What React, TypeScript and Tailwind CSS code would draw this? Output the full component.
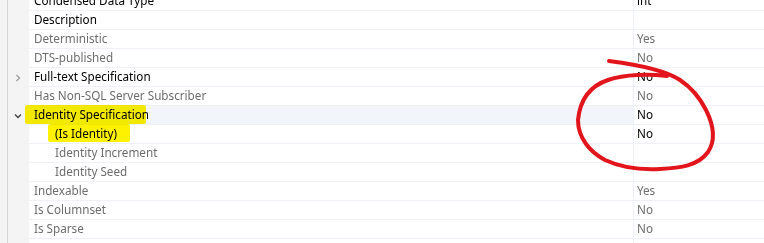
import React from 'react';

type Row = {
  label: string;
  value?: string;
  strong?: boolean;
  indent?: boolean;
  chevron?: 'right' | 'down';
  selected?: boolean;
};

const rows: Row[] = [
  { label: 'Condensed Data Type', value: 'int', strong: true },
  { label: 'Description', strong: true },
  { label: 'Deterministic', value: 'Yes' },
  { label: 'DTS-published', value: 'No' },
  { label: 'Full-text Specification', value: 'No', strong: true, chevron: 'right' },
  { label: 'Has Non-SQL Server Subscriber', value: 'No' },
  { label: 'Identity Specification', value: 'No', strong: true, chevron: 'down', selected: true },
  { label: '(Is Identity)', value: 'No', strong: true, indent: true },
  { label: 'Identity Increment', indent: true },
  { label: 'Identity Seed', indent: true },
  { label: 'Indexable', value: 'Yes' },
  { label: 'Is Columnset', value: 'No' },
  { label: 'Is Sparse', value: 'No' },
  { label: '' },
];

const Chevron = ({ dir }: { dir: 'right' | 'down' }) =>
  dir === 'right' ? (
    <svg width="8" height="8" viewBox="0 0 8 8" className="text-[#9a9a9a]">
      <path d="M2.5 1 L5.5 4 L2.5 7" fill="none" stroke="currentColor" strokeWidth="1.3" />
    </svg>
  ) : (
    <svg width="8" height="8" viewBox="0 0 8 8" className="text-[#444]">
      <path d="M1 2.5 L4 5.5 L7 2.5" fill="none" stroke="currentColor" strokeWidth="1.4" />
    </svg>
  );

export default function App() {
  return (
    <div
      className="relative w-[764px] h-[243px] overflow-hidden bg-white text-[11.7px]"
      style={{ fontFamily: '"Noto Sans", "Open Sans", sans-serif' }}
    >
      <div className="flex flex-col -mt-[8px]">
        {rows.map((r, i) => (
          <div key={i} className="flex h-[19px]">
            <div className="flex w-[29px] shrink-0 bg-[#f4f4f4]">
              <div className="w-[7px]" />
              <div className="w-px bg-[#d4d4d4]" />
              <div className="flex flex-1 items-center justify-center pr-[1px]">
                {r.chevron && <Chevron dir={r.chevron} />}
              </div>
            </div>
            <div
              className={`flex flex-1 items-center border-b border-[#eef1f5] ${
                r.selected ? 'bg-[#f2f6fb]' : ''
              } ${r.indent ? 'pl-[26px]' : 'pl-[5px]'} ${
                r.strong ? 'text-[#000]' : 'text-[#6d6d6d]'
              }`}
            >
              <span className="relative z-10 whitespace-nowrap">{r.label}</span>
            </div>
            <div
              className={`flex w-[131px] shrink-0 items-center border-b border-l border-[#eef1f5] pl-[3px] ${
                r.strong ? 'text-[#000]' : 'text-[#6d6d6d]'
              }`}
            >
              {r.value}
            </div>
          </div>
        ))}
      </div>

      {/* highlighter marks */}
      <div className="pointer-events-none absolute left-[25px] top-[105px] h-[19px] w-[121px] bg-[#fff200] mix-blend-multiply rounded-[2px]" />
      <div className="pointer-events-none absolute left-[48px] top-[124px] h-[18px] w-[82px] bg-[#fff200] mix-blend-multiply rounded-[2px]" />

      {/* red pen circle */}
      <svg className="pointer-events-none absolute left-0 top-0" width="764" height="243">
        <path
          d="M667 76 C650 74 625 74 608 80 C590 86 580 100 578 120 C578 138 590 152 605 160 C620 167 640 170 660 169 C680 168 698 166 708 152 C716 140 713 124 706 110 C700 98 692 88 680 80 C665 70 640 65 609 61"
          fill="none"
          stroke="#e3151c"
          strokeWidth="4"
          strokeLinecap="round"
          strokeLinejoin="round"
        />
      </svg>
    </div>
  );
}
